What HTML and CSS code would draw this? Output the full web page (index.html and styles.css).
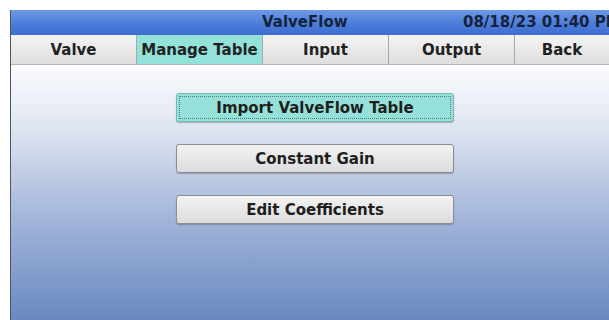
FILE: index.html
```html
<!DOCTYPE html>
<html>
<head>
<title>ValveFlow</title>
<meta name="viewport" content="width=device-width, initial-scale=1">
<link rel="stylesheet" href="styles.css">
</head>
<body>

<div class="screen">
  <div class="titlebar">
    <span class="title">ValveFlow</span>
    <span class="clock">08/18/23 01:40 PM</span>
  </div>

  <div class="tabs">
    <div class="tab">Valve</div>
    <div class="tab active">Manage Table</div>
    <div class="tab">Input</div>
    <div class="tab">Output</div>
    <div class="tab last">Back</div>
  </div>

  <div class="content">
    <button class="btn focused"><span>Import ValveFlow Table</span></button>
    <button class="btn"><span>Constant Gain</span></button>
    <button class="btn"><span>Edit Coefficients</span></button>
  </div>
</div>

</body>
</html>
```

FILE: styles.css
```css
html, body {
  margin: 0;
  height: 100%;
  overflow: hidden;
  background: #fff;
}

body {
  padding: 10px 0 0 10px;
  box-sizing: border-box;
  font-family: "DejaVu Sans", sans-serif;
  font-weight: bold;
  color: #1a1a1a;
}

.screen {
  width: 598px;
  height: 310px;
  border-left: 1px solid #4a5568;
  display: flex;
  flex-direction: column;
  overflow: hidden;
}

.titlebar {
  height: 25px;
  background: linear-gradient(#6d98e6, #4a7bd9 60%, #3d6ed0);
  position: relative;
  overflow: hidden;
  font-size: 15px;
  color: #16233f;
}

.title {
  position: absolute;
  left: 251px;
  top: 3px;
}

.clock {
  position: absolute;
  left: 452px;
  top: 3px;
  white-space: nowrap;
}

.tabs {
  display: flex;
  height: 30px;
}

.tab {
  width: 126px;
  flex-shrink: 0;
  box-sizing: border-box;
  border-right: 1px solid #a8a8a8;
  border-bottom: 1px solid #b4b4b4;
  background: linear-gradient(#f4f4f4, #dedede);
  display: flex;
  align-items: center;
  justify-content: center;
  font-size: 15px;
  color: #222;
}

.tab.last {
  width: auto;
  flex: 1;
  border-right: none;
}

.tab.active {
  background: #93e2da;
}

.content {
  flex: 1;
  background: linear-gradient(#fbfcfe, #dfe5f1 25%, #a3b5da 60%, #6888bf);
  display: flex;
  flex-direction: column;
  gap: 22px;
  padding: 28px 0 0 165px;
}

.btn {
  width: 278px;
  height: 29px;
  border: 1px solid #8a8d94;
  border-radius: 3px;
  background: linear-gradient(#f3f3f3, #dcdcdc);
  font-family: inherit;
  font-weight: bold;
  font-size: 15px;
  color: #1e1e1e;
  padding: 2px;
  box-shadow: 0 1px 1px rgba(60, 70, 90, 0.35);
}

.btn span {
  display: flex;
  align-items: center;
  justify-content: center;
  height: 100%;
  box-sizing: border-box;
  border: 1px dotted transparent;
}

.btn.focused {
  background: #95e0d8;
  border-color: #7bb8b2;
}

.btn.focused span {
  border-color: #4d7d78;
}
```
